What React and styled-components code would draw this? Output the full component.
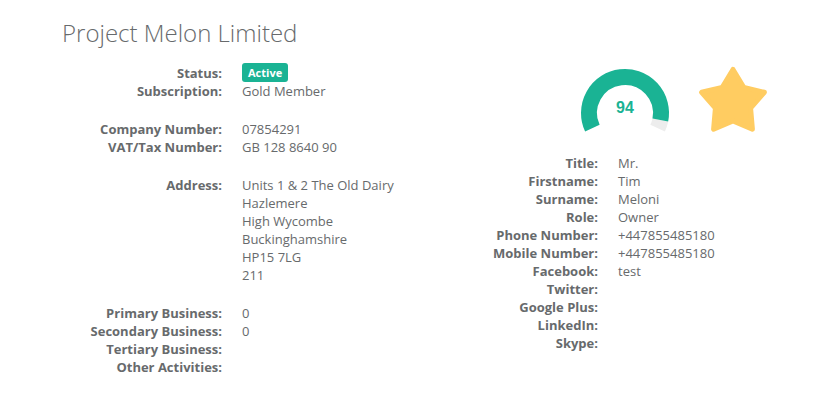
import React from "react";
import styled, { createGlobalStyle } from "styled-components";

const GlobalStyle = createGlobalStyle`
  body {
    margin: 0;
    background: #ffffff;
    font-family: "Open Sans", "Liberation Sans", sans-serif;
    color: #676a6c;
    font-size: 13px;
  }
`;

const Page = styled.div`
  width: 840px;
  height: 400px;
  box-sizing: border-box;
  padding: 20px 0 0 62px;
  overflow: hidden;
`;

const Title = styled.h2`
  margin: 0 0 18px;
  font-size: 24px;
  line-height: 26px;
  font-weight: 300;
  color: #676a6c;
`;

const Columns = styled.div`
  display: flex;
`;

const Column = styled.div`
  width: ${(p) => p.width}px;
  flex-shrink: 0;
`;

const List = styled.dl`
  display: grid;
  grid-template-columns: 160px 1fr;
  column-gap: 20px;
  margin: 0 0 20px;
  line-height: 18px;
`;

const Term = styled.dt`
  text-align: right;
  font-weight: 700;
  white-space: nowrap;
`;

const Detail = styled.dd`
  margin: 0;
  min-height: 18px;
`;

const Badge = styled.span`
  display: inline-block;
  height: 19px;
  line-height: 19px;
  padding: 0 6px;
  border-radius: 3px;
  background: #1ab394;
  color: #ffffff;
  font-size: 11px;
  font-weight: 700;
  vertical-align: top;
  margin-top: -1px;
`;

const Scores = styled.div`
  display: flex;
  align-items: flex-start;
  gap: 18px;
  height: 90px;
  padding-left: 137px;
`;

const polar = (cx, cy, r, deg) => {
  const a = (deg * Math.PI) / 180;
  return [cx + r * Math.sin(a), cy - r * Math.cos(a)];
};

const arc = (cx, cy, r, from, to) => {
  const [x1, y1] = polar(cx, cy, r, from);
  const [x2, y2] = polar(cx, cy, r, to);
  const large = to - from > 180 ? 1 : 0;
  return `M${x1} ${y1} A${r} ${r} 0 ${large} 1 ${x2} ${y2}`;
};

const Gauge = ({ value }) => {
  const start = -115;
  const end = 115;
  const split = start + ((end - start) * value) / 100;
  return (
    <svg width="100" height="90" viewBox="0 0 100 90">
      <path d={arc(50, 49, 36, split, end)} stroke="#ededed" strokeWidth="16" fill="none" />
      <path d={arc(50, 49, 36, start, split)} stroke="#1ab394" strokeWidth="16" fill="none" />
      <text
        x="50"
        y="43"
        textAnchor="middle"
        dominantBaseline="central"
        fill="#1ab394"
        fontFamily="Liberation Sans, Arial, sans-serif"
        fontWeight="700"
        fontSize="16"
      >
        {value}
      </text>
    </svg>
  );
};

const Star = () => {
  const pts = [];
  for (let i = 0; i < 10; i++) {
    const r = i % 2 === 0 ? 33 : 18.5;
    const [x, y] = polar(40, 38.5, r, i * 36);
    pts.push(`${x.toFixed(2)},${y.toFixed(2)}`);
  }
  return (
    <svg width="80" height="90" viewBox="0 0 80 90">
      <polygon
        points={pts.join(" ")}
        fill="#ffcc61"
        stroke="#ffcc61"
        strokeWidth="5"
        strokeLinejoin="round"
      />
    </svg>
  );
};

const Row = ({ label, children }) => (
  <>
    <Term>{label}:</Term>
    <Detail>{children}</Detail>
  </>
);

const App = () => (
  <>
    <GlobalStyle />
    <Page>
      <Title>Project Melon Limited</Title>
      <Columns>
        <Column width={376}>
          <List>
            <Row label="Status">
              <Badge>Active</Badge>
            </Row>
            <Row label="Subscription">Gold Member</Row>
          </List>
          <List>
            <Row label="Company Number">07854291</Row>
            <Row label="VAT/Tax Number">GB 128 8640 90</Row>
          </List>
          <List>
            <Row label="Address">
              Units 1 &amp; 2 The Old Dairy
              <br />
              Hazlemere
              <br />
              High Wycombe
              <br />
              Buckinghamshire
              <br />
              HP15 7LG
              <br />
              211
            </Row>
          </List>
          <List>
            <Row label="Primary Business">0</Row>
            <Row label="Secondary Business">0</Row>
            <Row label="Tertiary Business" />
            <Row label="Other Activities" />
          </List>
        </Column>
        <Column width={380}>
          <Scores>
            <Gauge value={94} />
            <Star />
          </Scores>
          <List>
            <Row label="Title">Mr.</Row>
            <Row label="Firstname">Tim</Row>
            <Row label="Surname">Meloni</Row>
            <Row label="Role">Owner</Row>
            <Row label="Phone Number">+447855485180</Row>
            <Row label="Mobile Number">+447855485180</Row>
            <Row label="Facebook">test</Row>
            <Row label="Twitter" />
            <Row label="Google Plus" />
            <Row label="LinkedIn" />
            <Row label="Skype" />
          </List>
        </Column>
      </Columns>
    </Page>
  </>
);

export default App;
